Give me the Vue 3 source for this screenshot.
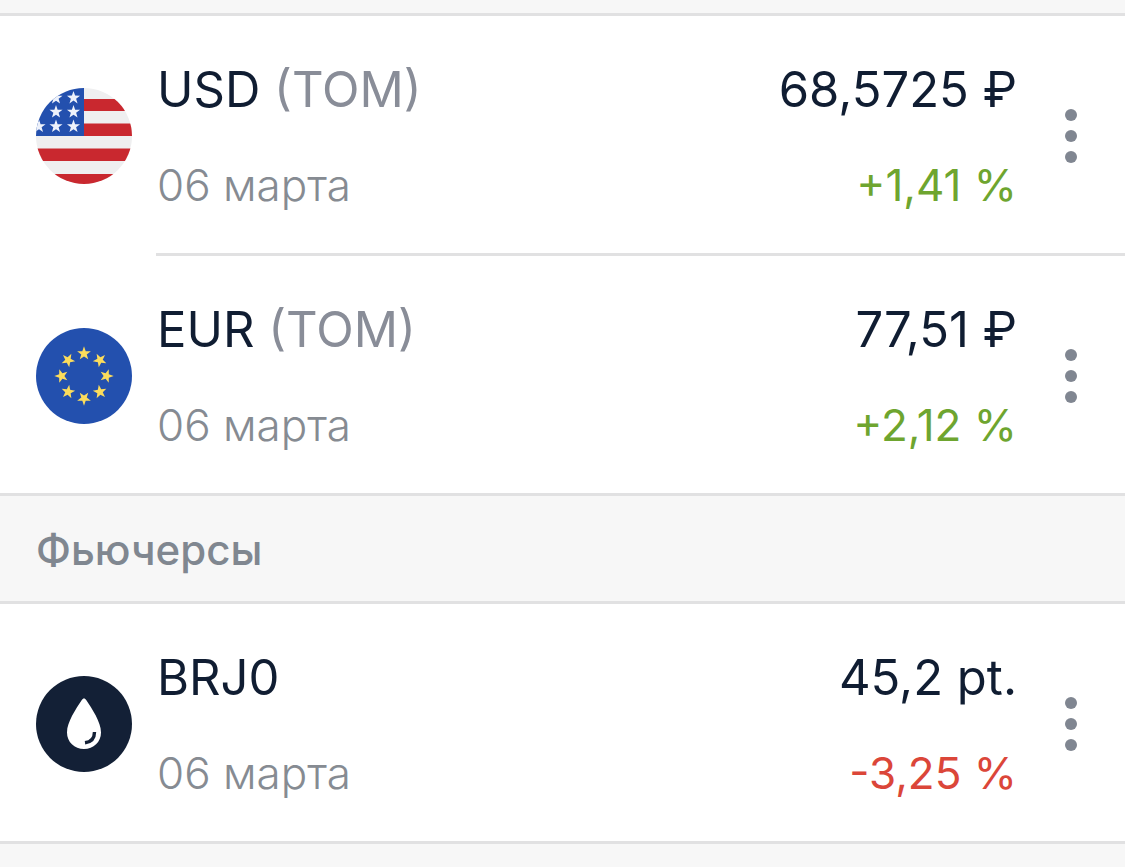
<script setup>
const starPoints = (cx, cy, r, turn = 0) =>
  Array.from({ length: 10 }, (_, i) => {
    const radius = i % 2 ? r * 0.4 : r
    const a = ((i * 36 - 90 + turn) * Math.PI) / 180
    return `${(cx + radius * Math.cos(a)).toFixed(2)},${(cy + radius * Math.sin(a)).toFixed(2)}`
  }).join(' ')

const usStars = [
  [20, 10], [37.5, 9.8],
  [20, 24], [37.5, 24],
  [3, 38.5], [20, 38.5], [37.5, 38.5],
].map(([x, y]) => starPoints(x, y, 6.9))

const euStars = [0, 45, 90, 135, 180, 225, 270, 315].map((deg) => {
  const a = (deg * Math.PI) / 180
  return starPoints(48 + 22.5 * Math.sin(a), 48 - 22.5 * Math.cos(a), 7.2, deg)
})

const groups = [
  {
    title: '',
    items: [
      { icon: 'us', name: 'USD', note: '(TOM)', date: '06 марта', price: '68,5725 ₽', change: '+1,41 %', up: true },
      { icon: 'eu', name: 'EUR', note: '(TOM)', date: '06 марта', price: '77,51 ₽', change: '+2,12 %', up: true },
    ],
  },
  {
    title: 'Фьючерсы',
    items: [
      { icon: 'oil', name: 'BRJ0', note: '', date: '06 марта', price: '45,2 pt.', change: '-3,25 %', up: false },
    ],
  },
]
</script>

<template>
  <main class="quotes">
    <section v-for="group in groups" :key="group.title" class="group">
      <h2 v-if="group.title" class="heading">{{ group.title }}</h2>
      <div v-else class="strip"></div>
      <ul class="list">
        <li v-for="item in group.items" :key="item.name" class="row">
          <div class="badge">
            <svg v-if="item.icon === 'us'" class="logo" viewBox="0 0 96 96" aria-hidden="true">
              <defs><clipPath id="flag-clip"><circle cx="48" cy="48" r="48" /></clipPath></defs>
              <g clip-path="url(#flag-clip)">
                <rect width="96" height="96" fill="#efeff0" />
                <path d="M48 11h48v12H48zM48 35.500h48V48H48zM0 60.500h96V73H0zM0 86h96v10H0z" fill="#c9282f" />
                <rect width="48" height="48" fill="#2350ae" />
                <polygon v-for="(p, i) in usStars" :key="i" :points="p" fill="#eef2fb" />
              </g>
            </svg>
            <svg v-else-if="item.icon === 'eu'" class="logo" viewBox="0 0 96 96" aria-hidden="true">
              <circle cx="48" cy="48" r="48" fill="#2350ae" />
              <polygon v-for="(p, i) in euStars" :key="i" :points="p" fill="#fbdc5c" />
            </svg>
            <svg v-else class="logo" viewBox="0 0 96 96" aria-hidden="true">
              <circle cx="48" cy="48" r="48" fill="#132036" />
              <path d="M48 22.500c1 0 1.600.6 2.200 1.600C56 33 65 46 65 56.500 65 66 57.500 73 48 73s-17-7-17-16.500C31 46 40 33 45.800 24.100c.6-1 1.200-1.600 2.200-1.600z" fill="#fff" />
              <path d="M58.500 56c0 6-3.500 10-9.500 10.800" fill="none" stroke="#132036" stroke-width="3.400" />
            </svg>
          </div>
          <div class="body">
            <div class="line">
              <span class="name">{{ item.name }} <span v-if="item.note" class="note">{{ item.note }}</span></span>
              <span>{{ item.price }}</span>
            </div>
            <div class="line sub">
              <span class="date">{{ item.date }}</span>
              <span :class="item.up ? 'up' : 'down'">{{ item.change }}</span>
            </div>
          </div>
          <button class="more" type="button" :aria-label="`${item.name}: меню`">
            <svg width="12" height="54" viewBox="0 0 12 54" fill="#808691" aria-hidden="true">
              <circle cx="6" cy="6" r="6" /><circle cx="6" cy="27" r="6" /><circle cx="6" cy="48" r="6" />
            </svg>
          </button>
        </li>
      </ul>
    </section>
    <div class="footer"></div>
  </main>
</template>

<style>
body {
  background: #f7f7f7;
}
</style>

<style scoped>
.quotes {
  font-family: Inter, "Liberation Sans", sans-serif;
  color: #101d32;
  background: #f7f7f7;
}
.strip {
  height: 13px;
  border-bottom: 3px solid #e1e1e2;
}
.heading {
  margin: 0;
  padding: 28px 36px 25px;
  font-size: 42px;
  line-height: 52px;
  font-weight: 500;
  color: #808790;
  border-bottom: 3px solid #e1e1e2;
}
.list {
  list-style: none;
  margin: 0;
  padding: 0;
  background: #fff;
}
.row {
  display: flex;
}
.row > * {
  box-sizing: border-box;
  padding-top: 3px;
  border: 0 solid #e1e1e2;
  border-bottom-width: 3px;
}
.badge {
  flex: none;
  display: flex;
  align-items: center;
  width: 156px;
  padding-left: 36px;
}
.row:not(:last-child) .badge {
  border-bottom-color: transparent;
}
.logo {
  width: 96px;
  height: 96px;
}
.row > .body {
  flex: 1;
  min-width: 0;
  display: flex;
  flex-direction: column;
  gap: 38px;
  padding: 45px 0 40px 1px;
}
.line {
  display: flex;
  justify-content: space-between;
  font-size: 49px;
  line-height: 58px;
  white-space: nowrap;
}
.sub {
  font-size: 44px;
  line-height: 56px;
}
.note {
  color: #898d98;
}
.date {
  font-weight: 300;
  color: #868b92;
}
.up {
  color: #6ea52f;
}
.down {
  color: #db4639;
}
.row > .more {
  flex: none;
  display: flex;
  align-items: center;
  justify-content: center;
  width: 108px;
  padding: 3px 0 0;
  margin: 0;
  background: none;
  cursor: pointer;
}
.footer {
  height: 23px;
}
</style>
